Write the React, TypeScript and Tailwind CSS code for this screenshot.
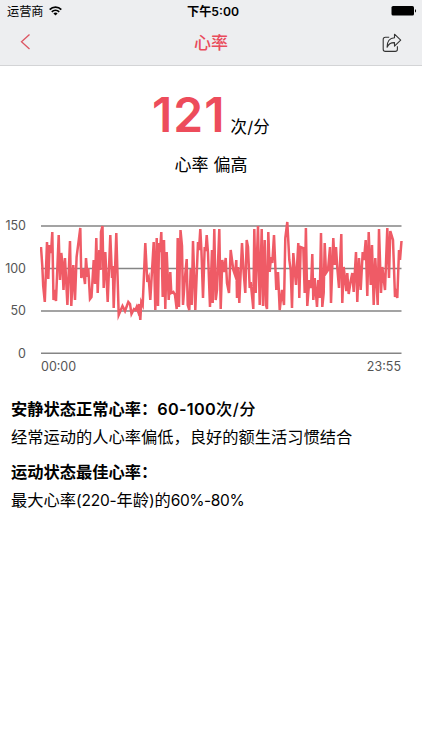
const TICKS = [150, 100, 50, 0]

// 心率曲线的坐标点
const TRACE =
  '41,247 42.3,266 43.2,286 44.8,302 47,242 48.3,279 49.6,245 51,253 52.3,232 53.5,300 54.7,290 56,301 58.7,235 60,280 61.3,253 62.3,262 63.5,290 65,258 67.4,305 70,241 71.3,306 73.3,265 75,300 76.6,257 80.3,228 81.3,278 83,269 85,284 86,258 87.5,277 88.3,268 90,299 91.5,297 93.7,260 95,284 96.3,238 97.7,293 99.3,250 100.5,270 101,232 102.5,226 103.7,288 105.3,252 107.7,302 110.3,235 112,278 112.8,266 113.7,308 116.3,233 118.7,315 122.5,306 125,311 128.3,302 130,304 131.5,314 134,309 135.5,310 136.7,307 138,311 139,304 140.3,320 141.3,302 142.7,305 145.3,243 147.3,282 148.7,278 150.3,300 153.7,242 155.3,310 156.7,238 158,306 159,243 160,252 161.3,232 162.7,297 164,240 165.3,309 166.7,252 168.7,300 170.3,272 171.3,293 173.3,292 175,295 176.7,309 177.7,238 179,307 180.5,230 182,246 183,305 185,277 186.7,259 187.7,305 189.3,310 190.7,269 191.7,305 193,241 195.3,310 198,242 199,250 200.3,229 201.4,250 203,298 204.7,247 205.7,251 206.7,235 208,253 210,307 212,250 212.7,303 214.3,229 215.7,300 217,290 219.3,229 220.7,309 222.3,260 224,272 225.7,258 227,283 229,293 230.7,250 233.3,270 235,275 236.3,260 237,298 238,267 239.3,303 242,243 243.7,273 245.3,293 246.7,240 248,247 249.7,288 250.7,282 253.3,309 254.3,229 255.7,293 258,226 259.7,305 261.7,229 263,306 264.7,240 266,305 267,309 268.3,232 269.7,272 271,257 272.3,263 274,235 276.3,290 278,272 279.7,310 282,290 284,305 285.3,238 287.3,222 289.3,260 290.7,270 292,308 293.3,253 294.7,270 296,285 298.3,243 299.3,298 300.7,247 303.3,248 304.7,293 305.9,228 307.3,306 309.3,280 311,288 312.3,254 313.3,300 314.7,278 317,307 318.3,280 319.7,298 321,233 322.3,307 323.7,293 324.7,243 326,273 328,270 330,247 331,303 333.3,238 334.7,265 336,247 337.3,268 339,288 341.3,234 342.3,303 343.7,267 346.3,291 347.3,273 348.7,294 350.7,281 352.3,273 353.7,292 356,252 357.3,302 359,258 360.7,290 362.7,252 364,260 365.7,240 367.3,296 368.7,232 370.7,285 372,245 373.7,305 375.3,258 377.7,305 379,229 381,293 382.3,267 385,290 387.3,228 389,278 390.3,231 393,240 395,297 396,293 397.3,298 399,250 400,260 401.5,241'

function StatusBar() {
  return (
    <div className="grid h-5 grid-cols-3 items-center pt-[3px] text-[12.2px] text-black">
      <div className="flex items-center gap-[5px] pl-[7px]">
        <span>运营商</span>
        <svg className="-mt-0.5" width="13" height="10" viewBox="0 0 13 10" fill="none" stroke="#000" strokeWidth="1.8">
          <path d="M0.7 3.6C3.9.4 9.1.4 12.3 3.6" />
          <path d="M2.8 5.8C4.9 3.8 8.1 3.8 10.2 5.8" />
          <path d="M4.4 7.4C5.6 6.3 7.4 6.3 8.6 7.4L6.5 9.5Z" fill="#000" stroke="none" />
        </svg>
      </div>
      <span className="pl-1 text-center font-semibold">下午5:00</span>
      <div className="flex justify-end pr-[5px]">
        <svg className="-mt-0.5" width="26" height="10" viewBox="0 0 26 10">
          <rect x="0.5" y="0" width="22.5" height="9.5" rx="1.6" />
          <path d="M24 3.2C25.4 3.4 25.4 6.2 24 6.4Z" />
        </svg>
      </div>
    </div>
  )
}

function NavBar() {
  return (
    <div className="flex h-[45px] items-center justify-between pr-5 pl-5">
      <svg className="-mt-px" width="20" height="18" viewBox="0 0 20 18" fill="none" stroke="#dc5562" strokeWidth="1.3">
        <path d="M9.5 1.5L1.5 8.8L9.5 16" />
      </svg>
      <h1 className="pt-0.5 text-[17px] font-medium text-[#e94b5b]">心率</h1>
      <svg width="20" height="20" viewBox="0 0 20 20" fill="none" stroke="#333" strokeWidth="1.1" strokeLinejoin="round">
        <path d="M7.2 4.3H3.4Q1.2 4.3 1.2 6.5V16.2Q1.2 18.4 3.4 18.4H13.2Q15.4 18.4 15.4 16.2V13.2" />
        <path d="M12.5 1.2L18.7 7.2L12.5 13.1V9.6C9 9.5 6.5 10.8 5.1 14.3C4.9 8.6 7.8 4.9 12.5 4.7Z" />
      </svg>
    </div>
  )
}

function HeartChart() {
  return (
    <div className="mt-[41px]">
      <div className="flex">
        <div className="flex w-[26px] flex-col gap-[26.5px] text-right text-[12.5px] leading-4 text-[#555]">
          {TICKS.map((tick) => (
            <span key={tick}>{tick}</span>
          ))}
        </div>
        <svg className="ml-[14px]" width="364" height="144" viewBox="40 218 364 144" fill="none">
          <path d="M41 226H401.5M41 268.5H401.5M41 311H401.5M41 353.2H401.5" stroke="#858585" strokeWidth="1.4" />
          <polyline points={TRACE} stroke="#ef5b66" strokeWidth="2.5" strokeLinejoin="miter" strokeMiterlimit="5" />
        </svg>
      </div>
      <div className="-mt-[3px] flex justify-between pr-[21px] pl-[41px] text-[12.5px] leading-4 text-[#555]">
        <span>00:00</span>
        <span>23:55</span>
      </div>
    </div>
  )
}

export default function App() {
  return (
    <div className="h-[750px] w-[422px] overflow-hidden bg-white font-['Inter','Noto_Sans_CJK_SC',sans-serif] text-black">
      <header className="h-[66px] border-b border-[#d3d4d6] bg-[#edeef0]">
        <StatusBar />
        <NavBar />
      </header>

      <main>
        <div className="mt-[23px] h-[52px] text-center text-[48px] leading-[52px]">
          <span className="mr-[5px] font-semibold tracking-[1px] text-[#ed4c5b]">121</span>
          <span className="align-[-1px] text-[16.5px] leading-none tracking-[0.2px]">次/分</span>
        </div>
        <p className="mt-[12px] text-center text-[17px] leading-6">心率 偏高</p>

        <HeartChart />

        <section className="mt-[20px] px-[11px] text-[16.25px] leading-7">
          <h2 className="font-semibold">
            安静状态正常心率：<span className="tracking-[0.3px]">60-100</span>
            <span className="font-medium tracking-[0.5px]">次/分</span>
          </h2>
          <p>经常运动的人心率偏低，良好的额生活习惯结合</p>
          <h2 className="mt-[7px] font-semibold">运动状态最佳心率：</h2>
          <p>
            最大心率<span className="text-[15.5px] tracking-[-0.2px]">(220-</span>年龄
            <span className="text-[15.5px] tracking-[-0.2px]">)</span>的
            <span className="text-[15.5px] tracking-[-0.4px]">60%-80%</span>
          </p>
        </section>
      </main>
    </div>
  )
}
